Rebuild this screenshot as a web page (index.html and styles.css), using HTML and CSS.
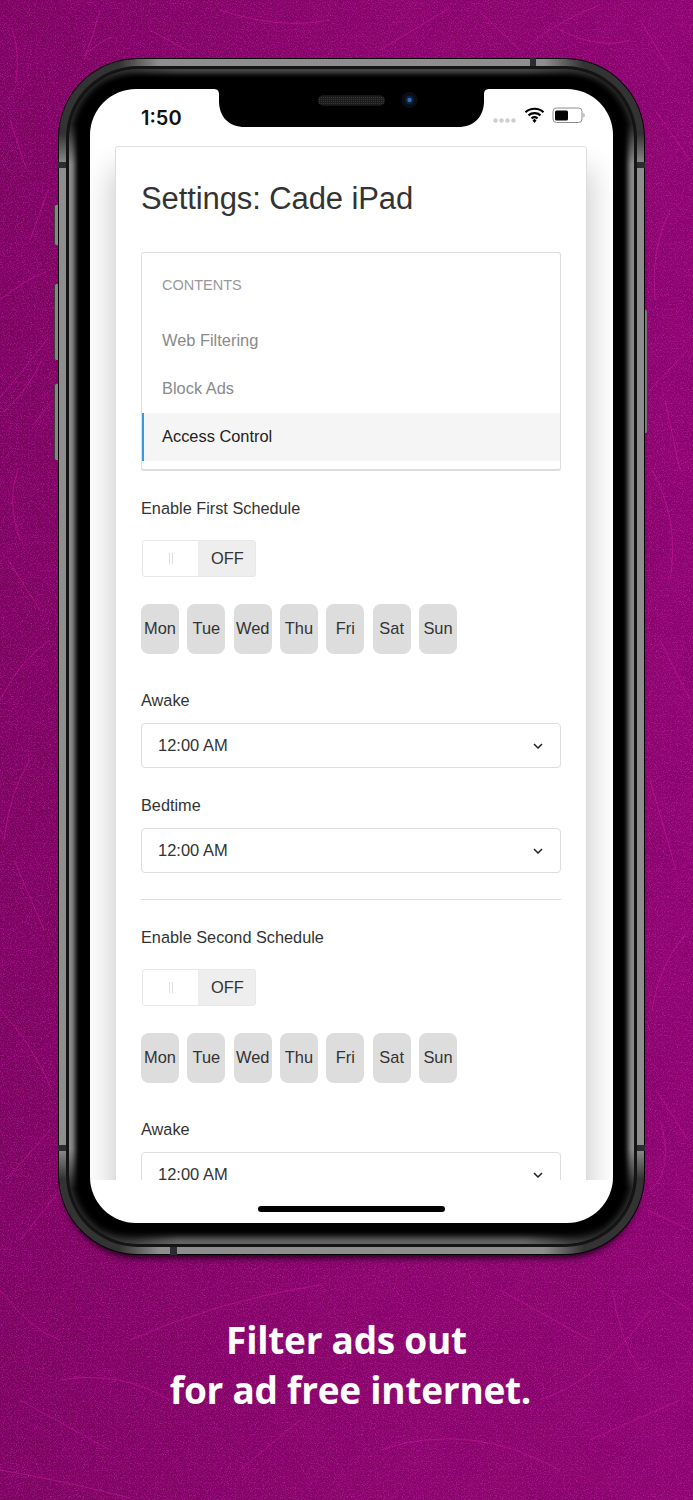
FILE: index.html
```html
<!DOCTYPE html>
<html lang="en">
<head>
<meta charset="utf-8">
<title>Settings: Cade iPad</title>
<link rel="stylesheet" href="styles.css">
</head>
<body>
<div class="page">
  <svg class="texture" viewBox="0 0 693 1500" preserveAspectRatio="none" aria-hidden="true">
    <defs>
      <filter id="grain" x="0" y="0" width="100%" height="100%">
        <feTurbulence type="fractalNoise" baseFrequency="0.85" numOctaves="2" seed="7"/>
        <feColorMatrix type="matrix" values="0 0 0 0 0.80  0 0 0 0 0.04  0 0 0 0 0.60  2.4 0 0 0 -1.15"/>
      </filter>
      <filter id="speck" x="0" y="0" width="100%" height="100%">
        <feTurbulence type="fractalNoise" baseFrequency="0.6" numOctaves="2" seed="21"/>
        <feColorMatrix type="matrix" values="0 0 0 0 0.28  0 0 0 0 0  0 0 0 0 0.18  2.6 0 0 0 -1.1"/>
      </filter>
      <filter id="mottle" x="0" y="0" width="100%" height="100%">
        <feTurbulence type="fractalNoise" baseFrequency="0.025" numOctaves="3" seed="3"/>
        <feColorMatrix type="matrix" values="0 0 0 0 0.22  0 0 0 0 0  0 0 0 0 0.14  2 0 0 0 -0.85"/>
      </filter>
      <linearGradient id="sideTone" x1="0" y1="0" x2="1" y2="0">
        <stop offset="0" stop-color="#500038" stop-opacity=".3"/>
        <stop offset=".6" stop-color="#500038" stop-opacity="0"/>
        <stop offset="1" stop-color="#b0009a" stop-opacity=".12"/>
      </linearGradient>
    </defs>
    <rect width="693" height="1500" fill="url(#sideTone)"/>
    <rect width="693" height="1500" filter="url(#mottle)" opacity=".6"/>
    <rect width="693" height="1500" filter="url(#speck)" opacity=".6"/>
    <rect width="693" height="1500" filter="url(#grain)" opacity=".55"/>
    <g class="scratches">
      <path d="M85 55 Q96 44 112 37"/><path d="M100 10 Q94 34 84 60"/><path d="M0 398 Q24 370 48 338"/>
      <path d="M42 360 Q28 390 4 412"/><path d="M12 30 Q20 50 16 80"/><path d="M0 300 Q24 280 46 272"/>
      <path d="M48 190 L30 240"/><path d="M10 120 L26 168"/><path d="M34 424 Q44 410 53 400"/>
      <path d="M18 470 Q6 500 20 540"/><path d="M0 700 Q20 660 50 640"/><path d="M14 860 L44 930"/>
      <path d="M0 1010 Q30 1040 52 1090"/><path d="M6 1180 L50 1130"/><path d="M20 1240 L60 1190"/>
      <path d="M640 20 L670 70"/><path d="M600 5 Q560 20 530 44"/><path d="M655 110 L690 160"/>
      <path d="M670 210 Q650 250 655 300"/><path d="M688 350 L650 390"/><path d="M652 470 Q680 520 670 580"/>
      <path d="M660 640 L690 700"/><path d="M650 780 L676 870"/><path d="M690 930 Q660 960 652 1010"/>
      <path d="M656 1090 L688 1140"/><path d="M648 1210 L690 1230"/><path d="M660 1290 L690 1310"/>
      <path d="M612 1290 Q620 1340 640 1370"/><path d="M0 1290 Q30 1330 60 1340"/><path d="M20 1400 L110 1450"/>
      <path d="M130 1340 Q220 1300 320 1285"/><path d="M380 1450 Q470 1420 560 1470"/><path d="M240 1470 L300 1420"/>
      <path d="M500 1290 L590 1340"/><path d="M0 1470 Q60 1480 130 1498"/><path d="M590 1440 L680 1400"/>
      <path d="M220 10 Q280 30 330 20"/><path d="M380 50 L450 8"/><path d="M480 12 L520 50"/>
      <path d="M150 30 L190 52"/><path d="M560 30 Q600 50 630 40"/><path d="M665 400 L680 470"/>
      <path d="M8 560 L40 610"/><path d="M30 760 Q10 790 4 840"/><path d="M660 1120 Q675 1170 650 1190"/>
      <path d="M60 1380 Q120 1370 170 1400"/><path d="M540 1400 Q600 1380 650 1310"/>
    </g>
  </svg>

  <div class="phone">
    <span class="side-btn silent"></span>
    <span class="side-btn vol-up"></span>
    <span class="side-btn vol-down"></span>
    <span class="side-btn power"></span>
    <div class="ring-outer">
      <div class="ring-line">
        <div class="ring-inner">
          <div class="screen">
            <svg class="notch" viewBox="0 0 277 38" aria-hidden="true">
              <defs>
                <pattern id="mesh" width="2" height="2" patternUnits="userSpaceOnUse">
                  <rect width="2" height="2" fill="#1b1b1b"/><rect width="1" height="1" fill="#3a3a3a"/>
                </pattern>
              </defs>
              <path d="M0 0C5 0 6 2 6 6V12C6 28 16 38 32 38H245C261 38 271 28 271 12V6C271 2 272 0 277 0Z" fill="#000"/>
              <rect x="105" y="6.500" width="67" height="10" rx="5" fill="url(#mesh)"/>
              <circle cx="196.500" cy="11" r="8" fill="#0b0d14"/>
              <circle cx="196.500" cy="11" r="4.500" fill="#10203c"/>
              <circle cx="196.500" cy="11" r="2.200" fill="#2b6cc4"/>
            </svg>

            <div class="status">
              <span class="time">1:50</span>
              <svg class="status-icons" viewBox="0 0 92 20" aria-hidden="true">
                <g fill="#cfcfcf">
                  <circle cx="2.500" cy="14.500" r="2.200"/><circle cx="8.500" cy="14.500" r="2.200"/>
                  <circle cx="14.500" cy="14.500" r="2.200"/><circle cx="20.500" cy="14.500" r="2.200"/>
                </g>
                <g fill="none" stroke="#000" stroke-width="2.200" stroke-linecap="butt">
                  <path d="M32.500 6.200C37.500 1.600 45.500 1.600 50.500 6.200"/>
                  <path d="M35.500 9.300C38.800 6.500 44.200 6.500 47.500 9.300"/>
                  <path d="M38.500 12.300C40.300 11 42.700 11 44.500 12.300"/>
                </g>
                <path d="M39.500 14.500L41.500 12.800 43.500 14.500 41.500 17Z" fill="#000"/>
                <rect x="60" y="2" width="29" height="14.500" rx="3.500" fill="#fff" stroke="#8c8c8c" stroke-width="1"/>
                <rect x="62" y="4.500" width="13" height="10" rx="1.500" fill="#000"/>
                <path d="M90.500 7V11.500C91.800 11 91.800 7.500 90.500 7Z" fill="#8c8c8c"/>
              </svg>
            </div>

            <div class="viewport">
              <main class="card">
                <h1 class="title">Settings: Cade iPad</h1>

                <nav class="contents">
                  <div class="contents-head">CONTENTS</div>
                  <a class="contents-item">Web Filtering</a>
                  <a class="contents-item">Block Ads</a>
                  <a class="contents-item active">Access Control</a>
                </nav>

                <section class="schedule">
                  <div class="label">Enable First Schedule</div>
                  <div class="switch"><span class="handle"><i class="grip"></i></span><span class="off">OFF</span></div>
                  <div class="days">
                    <span class="day">Mon</span><span class="day">Tue</span><span class="day">Wed</span><span class="day">Thu</span><span class="day">Fri</span><span class="day">Sat</span><span class="day">Sun</span>
                  </div>
                  <div class="label label-awake">Awake</div>
                  <div class="select"><span>12:00 AM</span><svg class="chevron" viewBox="0 0 10 6" aria-hidden="true"><path d="M1 1L5 5 9 1"/></svg></div>
                  <div class="label label-bed">Bedtime</div>
                  <div class="select"><span>12:00 AM</span><svg class="chevron" viewBox="0 0 10 6" aria-hidden="true"><path d="M1 1L5 5 9 1"/></svg></div>
                </section>

                <hr class="rule">

                <section class="schedule">
                  <div class="label">Enable Second Schedule</div>
                  <div class="switch"><span class="handle"><i class="grip"></i></span><span class="off">OFF</span></div>
                  <div class="days">
                    <span class="day">Mon</span><span class="day">Tue</span><span class="day">Wed</span><span class="day">Thu</span><span class="day">Fri</span><span class="day">Sat</span><span class="day">Sun</span>
                  </div>
                  <div class="label label-awake">Awake</div>
                  <div class="select"><span>12:00 AM</span><svg class="chevron" viewBox="0 0 10 6" aria-hidden="true"><path d="M1 1L5 5 9 1"/></svg></div>
                </section>
              </main>
            </div>

            <div class="home-area"><span class="home-bar"></span></div>
          </div>
        </div>
      </div>
    </div>
    <span class="band band-lt"></span>
    <span class="band band-lb"></span>
    <span class="band band-rt"></span>
    <span class="band band-rb"></span>
    <span class="band band-top"></span>
    <span class="band band-bottom"></span>
  </div>

  <p class="caption"><span class="line-1">Filter ads out</span><span class="line-2">for ad free internet.</span></p>
</div>
</body>
</html>
```
FILE: styles.css
```css
* { box-sizing: border-box; }
html, body { margin: 0; padding: 0; }
body { width: 693px; height: 1500px; overflow: hidden; font-family: "Liberation Sans", Arial, sans-serif; color: #333; }

.page { position: relative; width: 693px; height: 1500px; padding: 58px 48px 0 58px; background: #88076a; overflow: hidden; }
.texture { position: absolute; left: 0; top: 0; width: 693px; height: 1500px; }
.scratches path { fill: none; stroke: #dc1ca6; stroke-width: 1; opacity: .45; }

/* Phone body */
.phone { position: relative; width: 587px; height: 1197px; padding: 1px; border-radius: 80px; background: #060606; box-shadow: 0 8px 6px -5px rgba(30, 0, 25, .9); }

.ring-outer, .ring-inner { position: relative; }
.ring-outer::before, .ring-outer::after, .ring-inner::before, .ring-inner::after { content: ""; position: absolute; inset: 0; border-radius: inherit; }

/* outer polished band: grey on the straights, dark round the corners */
.ring-outer { height: 100%; padding: 7px; border-radius: 79px; background: #333; }
.ring-outer::before { background: #8e8e8e; -webkit-mask-image: linear-gradient(to bottom, transparent 75px, #000 105px, #000 calc(100% - 105px), transparent calc(100% - 75px)); mask-image: linear-gradient(to bottom, transparent 75px, #000 105px, #000 calc(100% - 105px), transparent calc(100% - 75px)); }
.ring-outer::after { background: #8e8e8e; -webkit-mask-image: linear-gradient(to right, transparent 60px, #000 100px, #000 calc(100% - 100px), transparent calc(100% - 60px)); mask-image: linear-gradient(to right, transparent 60px, #000 100px, #000 calc(100% - 100px), transparent calc(100% - 60px)); }
.ring-line { position: relative; z-index: 1; height: 100%; padding: 3px; border-radius: 72px; background: #141414; }

/* inner glossy band fading into the black bezel */
.ring-inner { height: 100%; padding: 20px 21px 21px; border-radius: 69px; background: #000; box-shadow: inset 0 0 7px 2px #383838; }
.ring-inner::before { box-shadow: inset 9px 0 5px -3px #8c8c8c, inset -9px 0 5px -3px #8c8c8c; -webkit-mask-image: linear-gradient(to bottom, transparent 55px, #000 95px, #000 calc(100% - 95px), transparent calc(100% - 55px)); mask-image: linear-gradient(to bottom, transparent 55px, #000 95px, #000 calc(100% - 95px), transparent calc(100% - 55px)); }
.ring-inner::after { box-shadow: inset 0 7px 5px -3px #484848, inset 0 -10px 6px -3px #666; -webkit-mask-image: linear-gradient(to right, transparent 30px, #000 110px, #000 calc(100% - 110px), transparent calc(100% - 30px)); mask-image: linear-gradient(to right, transparent 30px, #000 110px, #000 calc(100% - 110px), transparent calc(100% - 30px)); }

.side-btn { position: absolute; width: 4px; background: #858585; border-left: 1px solid #3c3c3c; border-radius: 2px 0 0 2px; }
.silent { left: -4px; top: 147px; height: 40px; }
.vol-up { left: -4px; top: 226px; height: 76px; }
.vol-down { left: -4px; top: 326px; height: 76px; }
.power { right: -3px; left: auto; top: 252px; height: 123px; width: 3px; border-left: 0; border-right: 1px solid #3c3c3c; border-radius: 0 2px 2px 0; background: #7a7a7a; }

.band { position: absolute; background: #2b2d33; }
.band-lt { left: 0; top: 104px; width: 9px; height: 6px; }
.band-lb { left: 0; top: 1087px; width: 9px; height: 6px; }
.band-rt { right: 0; top: 104px; width: 9px; height: 6px; }
.band-rb { right: 0; top: 1087px; width: 9px; height: 6px; }
.band-top { left: 472px; top: 0; width: 6px; height: 9px; }
.band-bottom { left: 112px; bottom: 0; width: 7px; height: 10px; }

/* Screen */
.screen { position: relative; z-index: 1; display: flex; flex-direction: column; height: 100%; background: #fff; border-radius: 46px; overflow: hidden; }
.notch { position: absolute; left: 123px; top: 0; width: 277px; height: 38px; }

.status { display: flex; align-items: center; flex: none; height: 57px; padding: 0 28px 0 51px; }
.time { font-family: Inter, "Liberation Sans", sans-serif; font-size: 20px; font-weight: 600; color: #111; }
.status-icons { width: 92px; height: 20px; margin-left: auto; margin-top: -3px; }

.viewport { flex: none; height: 1034px; overflow: hidden; padding: 0 26px 0 25px; }
.card { height: 1200px; padding: 32px 25px 0; background: #fff; border: 1px solid #ddd; border-radius: 3px; box-shadow: 0 26px 30px 4px rgba(0, 0, 0, .2); }
.title { margin: 0; font-size: 31px; line-height: 40px; font-weight: 400; letter-spacing: -.1px; color: #333; }

.contents { margin-top: 33px; padding: 20px 0 7px; height: 219px; border: 1px solid #ddd; border-bottom-width: 2px; border-radius: 3px; }
.contents-head { padding-left: 20px; font-size: 14.500px; line-height: 24px; color: #999; margin-bottom: 20px; }
.contents-item { display: block; height: 48px; padding-left: 20px; font-size: 16.400px; line-height: 46px; color: #8a8a8a; }
.contents-item.active { color: #222; background: #f5f5f5; border-left: 2px solid #3a98e0; padding-left: 18px; }

.schedule { margin-top: 26px; }
.label { height: 24px; font-size: 16.300px; line-height: 22px; color: #333; }
.label-awake { margin-top: 35px; }
.label-bed { margin-top: 26px; }

.switch { display: flex; width: 114px; height: 37px; margin: 19px 0 0 1px; border: 1px solid #e8e8e8; border-radius: 3px; background: #eee; font-size: 16.400px; overflow: hidden; }
.handle { display: flex; align-items: center; justify-content: center; width: 55px; background: #fff; }
.grip { display: block; width: 4px; height: 11px; border-left: 1px solid #ddd; border-right: 1px solid #ddd; }
.off { flex: 1; padding-left: 2px; text-align: center; line-height: 35px; color: #333; }

.days { display: flex; gap: 8.330px; margin-top: 27px; }
.day { width: 38px; height: 50px; border-radius: 8px; background: #ddd; font-size: 16.400px; line-height: 48px; text-align: center; color: #333; white-space: nowrap; }

.select { display: flex; align-items: center; justify-content: space-between; height: 45px; margin-top: 10px; padding: 0 17px 0 16px; border: 1px solid #ddd; border-radius: 4px; background: #fff; font-size: 16.500px; color: #333; }
.chevron { width: 10px; height: 6px; }
.chevron path { fill: none; stroke: #222; stroke-width: 1.5; }

.rule { margin: 26px 0 0; height: 1px; border: 0; background: #ddd; }

.home-area { flex: 1; display: flex; justify-content: center; padding-top: 26px; }
.home-bar { width: 187px; height: 6px; border-radius: 3px; background: #000; }

/* Caption */
.caption { position: relative; margin: 60px 0 0 -58px; width: 693px; text-align: center; font-family: "Open Sans", sans-serif; font-weight: 700; font-size: 37px; letter-spacing: -.25px; line-height: 50px; color: #fff; }
.line-1, .line-2 { display: block; }
.line-2 { padding-left: 8px; }
```
